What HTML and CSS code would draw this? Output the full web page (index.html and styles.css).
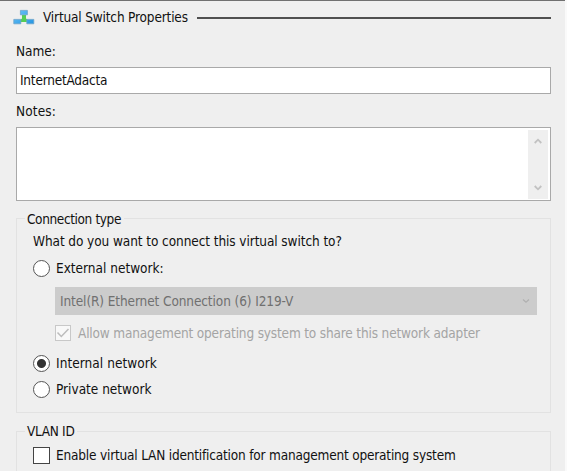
FILE: index.html
```html
<!DOCTYPE html>
<html lang="en">
<head>
<meta charset="utf-8">
<title>Virtual Switch Properties</title>
<link rel="stylesheet" href="styles.css">
</head>
<body>
<main class="panel">
  <header class="heading">
    <svg class="switch-icon" width="22" height="16" viewBox="0 0 22 16">
      <defs><linearGradient id="blue" x2="1" y2="1"><stop stop-color="#6cc5f8"/><stop offset="1" stop-color="#2595e2"/></linearGradient></defs>
      <path d="M9 6h4v3.500l2 1.500v2H7v-2l2-1.500z" fill="#55ce55"/>
      <g fill="url(#blue)" stroke="#6ba3cc" stroke-width=".8"><path d="M7.400 1.400h7v4.400h-7zM.8 10.400h7v4.400h-7zM13.800 10.400h7v4.400h-7z"/></g>
    </svg>
    <span class="t-title">Virtual Switch Properties</span>
    <i class="rule"></i>
  </header>
  <label class="field-label name-label"><span class="t-name">Name:</span></label>
  <div class="name-box"><span class="t-value">InternetAdacta</span></div>
  <label class="field-label notes-label"><span class="t-notes">Notes:</span></label>
  <div class="notes-box">
    <div class="scrollbar">
      <svg width="8" height="6" viewBox="0 0 8 6"><path d="M.7 5L4 1.700 7.300 5"/></svg>
      <svg width="8" height="6" viewBox="0 0 8 6"><path d="M.7 1L4 4.300 7.300 1"/></svg>
    </div>
  </div>
  <section class="group connection">
    <h2 class="caption"><span class="t-conn">Connection type</span></h2>
    <p class="question"><span class="t-question">What do you want to connect this virtual switch to?</span></p>
    <div class="option external"><i class="radio"></i><span class="t-external">External network:</span></div>
    <div class="combo"><span class="t-intel">Intel(R) Ethernet Connection (6) I219-V</span>
      <svg width="8" height="6" viewBox="0 0 8 6"><path d="M1 1.500L4 4.300 7 1.500"/></svg></div>
    <div class="option share"><i class="check"><svg width="14" height="14" viewBox="0 0 14 14"><path d="M1.500 6.500L5.300 10.500 12.500 3"/></svg></i><span class="t-allow">Allow management operating system to share this network adapter</span></div>
    <div class="option internal"><i class="radio selected"></i><span class="t-internal">Internal network</span></div>
    <div class="option private"><i class="radio"></i><span class="t-private">Private network</span></div>
  </section>
  <section class="group vlan">
    <h2 class="caption"><span class="t-vlan">VLAN ID</span></h2>
    <div class="option enable"><i class="box"></i><span class="t-enable">Enable virtual LAN identification for management operating system</span></div>
  </section>
</main>
</body>
</html>
```
FILE: styles.css
```css
* { box-sizing: border-box; }
body { margin: 0; background: #fafafa; overflow: hidden; }
.panel {
  width: 565px; height: 471px; padding: 0 14px 0 16px; overflow: hidden;
  background: #efefef; border-top: 1px solid #707070;
  font: 13.5px/18px "DejaVu Sans Condensed", "DejaVu Sans", sans-serif;
  font-stretch: condensed; color: #111; white-space: nowrap;
}
.heading { display: flex; align-items: center; height: 33px; margin-left: -3px; }
.switch-icon { margin: 0 8px 2px 0; flex: none; }
.rule { flex: 1; height: 2px; margin-left: 9px; background: #505050; }
.field-label { display: flex; align-items: center; }
.name-label { height: 33px; }
.name-box { display: flex; align-items: center; height: 27px; padding: 0 0 2px 3px; background: #fff; border: 1px solid #a9a9a9; }
.notes-label { height: 33px; }
.notes-box { display: flex; justify-content: flex-end; height: 74px; padding: 2px 2px 1px; background: #fff; border: 1px solid #a9a9a9; }
.scrollbar { display: flex; flex-direction: column; justify-content: space-between; align-items: center; width: 20px; padding: 8px 0; background: #efefef; }
.scrollbar svg { fill: none; stroke: #c2c2c2; stroke-width: 1.800; }
.group { border: 1px solid #e2e2e2; }
.connection { height: 195px; margin-top: 17px; }
.vlan { height: 60px; margin-top: 18px; }
.caption { width: max-content; height: 18px; margin: -9px 0 0 8px; padding: 0 3px 0 2px; background: #efefef; font: inherit; color: #111; }
.vlan .caption { margin-top: -10px; }
.question { height: 18px; margin: 4px 0 0 16px; }
.option { display: flex; align-items: center; height: 18px; margin-left: 16px; }
.external { margin-top: 9px; }
.radio { flex: none; width: 17px; height: 17px; margin-right: 6px; border: 1.500px solid #555; border-radius: 50%; background: #fff; }
.selected { background: radial-gradient(circle, #333 4px, #fff 5px); }
.combo { display: flex; align-items: center; justify-content: space-between; width: 482px; height: 28px; margin: 10px 0 0 38px; padding: 0 7px 0 5px; background: #ccc; color: #707070; }
.combo svg { fill: none; stroke: #b0b0b0; stroke-width: 1.200; }
.share { margin: 9px 0 0 38px; color: #a4a4a4; }
.check { display: flex; width: 16px; height: 16px; margin-right: 7px; border: 1px solid #c8c8c8; background: #f8f8f8; }
.check svg { fill: none; stroke: #bcbcbc; stroke-width: 1.500; }
.internal { margin-top: 12px; }
.private { margin-top: 8px; }
.enable { margin-top: 6px; }
.box { width: 17px; height: 17px; margin-right: 6px; border: 1px solid #444; background: #fff; }
.t-title { letter-spacing: -.16px; padding-bottom: 2px; }
.t-value { letter-spacing: -.22px; }
.t-notes { letter-spacing: .15px; }
.t-conn { letter-spacing: -.38px; }
.t-question { letter-spacing: -.08px; }
.t-intel { letter-spacing: -.1px; }
.t-allow { letter-spacing: -.16px; }
.t-internal { letter-spacing: .06px; }
.t-vlan { letter-spacing: -.3px; }
.t-enable { letter-spacing: -.185px; }
```
